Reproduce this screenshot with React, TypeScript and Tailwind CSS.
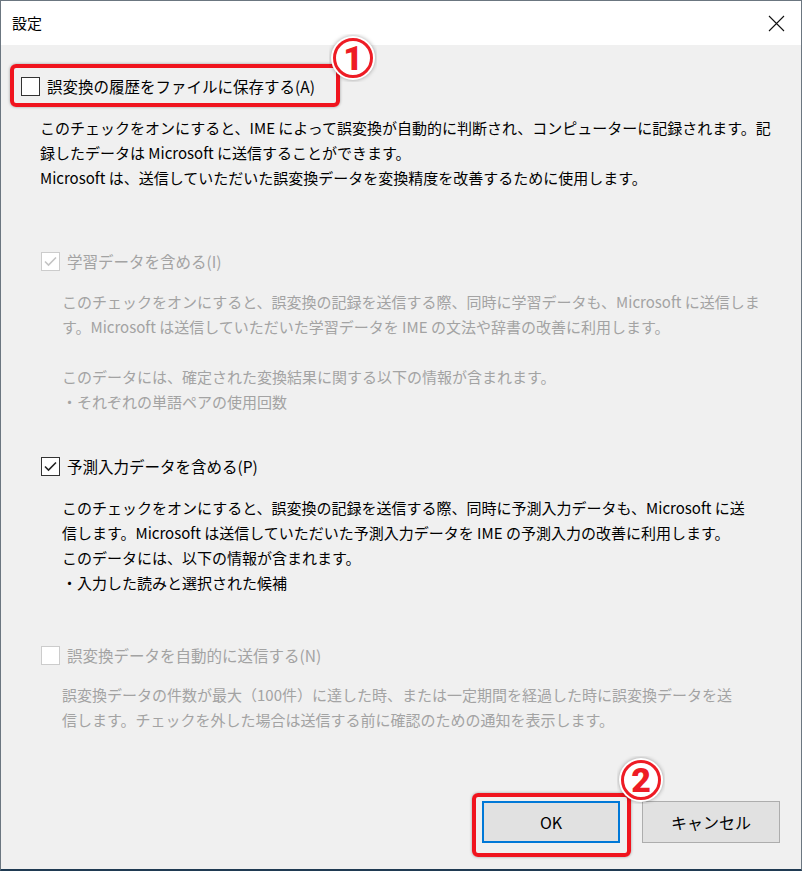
import React from "react";

const font = "font-['Noto_Sans_CJK_JP','Noto_Sans',sans-serif]";

function Checkbox({ checked, disabled }: { checked?: boolean; disabled?: boolean }) {
  return (
    <div
      className={`w-[19px] h-[19px] shrink-0 border flex items-center justify-center bg-white ${
        disabled ? "border-[#cccccc]" : "border-[#333333]"
      }`}
    >
      {checked && (
        <svg width="15" height="15" viewBox="0 0 15 15" fill="none">
          <polyline
            points="2,7.5 5.5,11 13,3.5"
            stroke={disabled ? "#c4c4c4" : "#222222"}
            strokeWidth="1.6"
          />
        </svg>
      )}
    </div>
  );
}

function Row({
  label,
  checked,
  disabled,
  className = "",
}: {
  label: string;
  checked?: boolean;
  disabled?: boolean;
  className?: string;
}) {
  return (
    <div className={`flex items-center gap-[7px] h-[25px] ${className}`}>
      <Checkbox checked={checked} disabled={disabled} />
      <span className={`text-[15.5px] whitespace-nowrap ${disabled ? "text-[#a3a3a3]" : "text-black"}`}>
        {label}
      </span>
    </div>
  );
}

function Para({ lines, disabled, className = "" }: { lines: string[]; disabled?: boolean; className?: string }) {
  return (
    <div className={`text-[15px] leading-[25px] whitespace-nowrap ${disabled ? "text-[#a3a3a3]" : "text-black"} ${className}`}>
      {lines.map((l, i) => (
        <div key={i} className="h-[25px]">
          {l}
        </div>
      ))}
    </div>
  );
}

function Badge({ n, className }: { n: string; className: string }) {
  return (
    <div className={`absolute ${className}`}>
      <svg width="48" height="48" viewBox="0 0 48 48">
        <circle cx="24" cy="24" r="22" fill="white" style={{ filter: "drop-shadow(0 0 2px rgba(0,0,0,0.35))" }} />
        <circle cx="24" cy="24" r="18.5" fill="white" stroke="#ee1c25" strokeWidth="3" />
        <text
          x="24"
          y="36"
          textAnchor="middle"
          fontSize="34"
          fontWeight="900"
          fontFamily="Roboto, 'Liberation Sans', sans-serif"
          fill="#ee1c25"
          stroke="white"
          strokeWidth="1.5"
          paintOrder="stroke"
        >
          {n}
        </text>
      </svg>
    </div>
  );
}

export default function App() {
  return (
    <div className={`relative w-[802px] h-[871px] flex flex-col bg-[#f0f0f0] border-l border-t border-r border-[#6b7680] border-b-2 border-b-[#1f3a52] ${font}`}>
      {/* title bar */}
      <div className="h-[44px] bg-white flex items-center justify-between pl-[11px] pr-[16px] shrink-0">
        <span className="text-[15px] text-black">設定</span>
        <svg width="17" height="17" viewBox="0 0 17 17">
          <path d="M1 1L16 16M16 1L1 16" stroke="#111" strokeWidth="1.1" />
        </svg>
      </div>

      {/* body */}
      <div className="flex-1 flex flex-col pt-[29px]">
        <Row label="誤変換の履歴をファイルに保存する(A)" className="pl-[20px]" />
        <Para
          className="pl-[39px] mt-[16px]"
          lines={[
            "このチェックをオンにすると、IME によって誤変換が自動的に判断され、コンピューターに記録されます。記",
            "録したデータは Microsoft に送信することができます。",
            "Microsoft は、送信していただいた誤変換データを変換精度を改善するために使用します。",
          ]}
        />

        <Row label="学習データを含める(I)" checked disabled className="pl-[40px] mt-[59px]" />
        <Para
          disabled
          className="pl-[61px] mt-[15px]"
          lines={[
            "このチェックをオンにすると、誤変換の記録を送信する際、同時に学習データも、Microsoft に送信しま",
            "す。Microsoft は送信していただいた学習データを IME の文法や辞書の改善に利用します。",
            "",
            "このデータには、確定された変換結果に関する以下の情報が含まれます。",
            "・それぞれの単語ペアの使用回数",
          ]}
        />

        <Row label="予測入力データを含める(P)" checked className="pl-[40px] mt-[40px]" />
        <Para
          className="pl-[61px] mt-[16px]"
          lines={[
            "このチェックをオンにすると、誤変換の記録を送信する際、同時に予測入力データも、Microsoft に送",
            "信します。Microsoft は送信していただいた予測入力データを IME の予測入力の改善に利用します。",
            "このデータには、以下の情報が含まれます。",
            "・入力した読みと選択された候補",
          ]}
        />

        <Row label="誤変換データを自動的に送信する(N)" disabled className="pl-[40px] mt-[48px]" />
        <Para
          disabled
          className="pl-[61px] mt-[14px]"
          lines={[
            "誤変換データの件数が最大（100件）に達した時、または一定期間を経過した時に誤変換データを送",
            "信します。チェックを外した場合は送信する前に確認のための通知を表示します。",
          ]}
        />

        <div className="flex justify-end gap-[22px] pr-[21px] mt-[69px]">
          <button className="w-[138px] h-[42px] bg-[#e1e1e1] border-2 border-[#0078d7] text-[16px] text-black">OK</button>
          <button className="w-[138px] h-[42px] bg-[#e1e1e1] border border-[#adadad] text-[16px] text-black">キャンセル</button>
        </div>
      </div>

      {/* annotations */}
      <div className="absolute left-[9px] top-[63px] w-[330px] h-[43px] border-[4px] border-[#f0141e] rounded-[6px] shadow-[0_0_3px_rgba(0,0,0,0.35)]" />
      <Badge n="1" className="left-[328px] top-[33px]" />
      <div className="absolute left-[471px] top-[792px] w-[159px] h-[64px] border-[4px] border-[#f0141e] rounded-[6px] shadow-[0_0_3px_rgba(0,0,0,0.35)]" />
      <Badge n="2" className="left-[616px] top-[755px]" />
    </div>
  );
}
